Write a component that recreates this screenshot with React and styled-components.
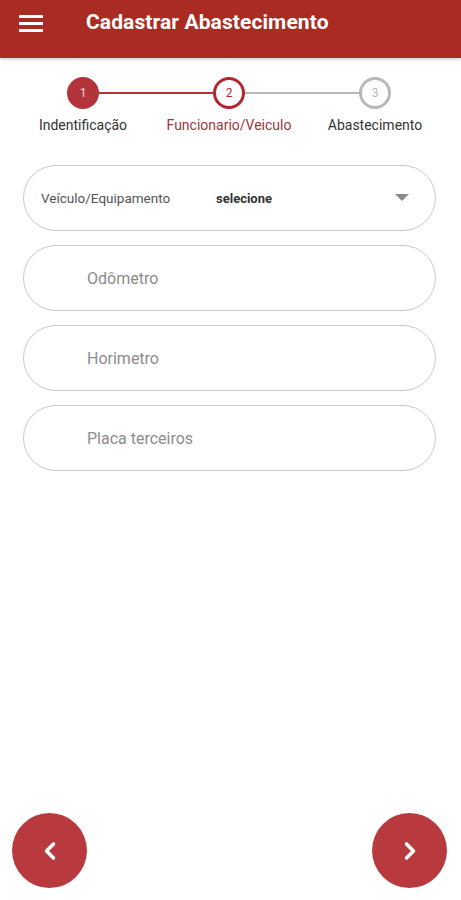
import React from 'react';
import styled, { createGlobalStyle } from 'styled-components';

const GlobalStyle = createGlobalStyle`
  html, body {
    margin: 0;
    padding: 0;
    background: #ffffff;
    font-family: Roboto, "Noto Sans", "Liberation Sans", sans-serif;
  }
`;

const Screen = styled.div`
  display: flex;
  flex-direction: column;
  width: 461px;
  height: 900px;
  background: #ffffff;
  overflow: hidden;
`;

const Header = styled.header`
  display: flex;
  align-items: center;
  height: 58px;
  padding: 0 0 0 19px;
  background-color: #aa2b22;
  box-shadow: 0 1px 3px rgba(0, 0, 0, 0.25);
  box-sizing: border-box;
  flex-shrink: 0;
`;

const MenuButton = styled.div`
  display: flex;
  flex-direction: column;
  justify-content: space-between;
  width: 24px;
  height: 17px;
  margin-right: 43px;
  margin-top: -12px;

  & span {
    display: block;
    height: 3px;
    background: #ffffff;
  }
`;

const Title = styled.h1`
  margin: -14px 0 0;
  color: #ffffff;
  font-size: 21px;
  font-weight: 700;
  letter-spacing: 0.1px;
`;

const Stepper = styled.div`
  display: grid;
  grid-template-columns: repeat(3, 146px);
  padding: 19px 0 0 10px;
`;

const Step = styled.div`
  position: relative;
  display: flex;
  flex-direction: column;
  align-items: center;

  &::after {
    content: '';
    display: ${({ $line }) => ($line ? 'block' : 'none')};
    position: absolute;
    top: 16px;
    left: 50%;
    width: 146px;
    height: 2px;
    margin-top: -1px;
    background: ${({ $line }) => $line};
    z-index: 0;
  }
`;

const Circle = styled.div`
  position: relative;
  z-index: 1;
  display: flex;
  align-items: center;
  justify-content: center;
  width: 32px;
  height: 32px;
  border-radius: 50%;
  box-sizing: border-box;
  font-size: 12px;
  background: ${({ $filled }) => ($filled ? '#b3343a' : '#ffffff')};
  border: 3px solid ${({ $color }) => $color};
  color: ${({ $filled, $color }) => ($filled ? '#f6dede' : $color)};
`;

const StepLabel = styled.div`
  margin-top: 8px;
  font-size: 14px;
  color: ${({ $active }) => ($active ? '#a3343a' : '#333333')};
  white-space: nowrap;
`;

const Form = styled.div`
  display: flex;
  flex-direction: column;
  gap: 14px;
  padding: 32px 25px 0 23px;
`;

const Field = styled.div`
  display: flex;
  align-items: center;
  height: 66px;
  padding: 0 ${({ $select }) => ($select ? '26px 0 17px' : '0 0 63px')};
  border: 1px solid #c9c9c9;
  border-radius: 33px;
  box-sizing: border-box;
`;

const SelectLabel = styled.span`
  width: 175px;
  font-size: 13.5px;
  color: #555555;
  white-space: nowrap;
`;

const SelectValue = styled.span`
  flex: 1;
  font-size: 13px;
  font-weight: 700;
  color: #333333;
`;

const Caret = styled.span`
  width: 0;
  height: 0;
  border-left: 7px solid transparent;
  border-right: 7px solid transparent;
  border-top: 7px solid #8a8a8a;
  margin-top: -2px;
`;

const Placeholder = styled.span`
  font-size: 16px;
  color: #8c8c8c;
`;

const Footer = styled.div`
  display: flex;
  justify-content: space-between;
  margin-top: auto;
  padding: 0 14px 12px 12px;
`;

const RoundButton = styled.button`
  display: flex;
  align-items: center;
  justify-content: center;
  width: 75px;
  height: 75px;
  padding: 0;
  border: none;
  border-radius: 50%;
  background: #b83a3e;
  cursor: pointer;
`;

const Chevron = ({ dir }) => (
  <svg width="26" height="26" viewBox="0 0 26 26">
    <path
      d={dir === 'left' ? 'M16.5 6 L9.5 13 L16.5 20' : 'M9.5 6 L16.5 13 L9.5 20'}
      fill="none"
      stroke="#ffffff"
      strokeWidth="3.6"
      strokeLinecap="round"
      strokeLinejoin="round"
    />
  </svg>
);

const steps = [
  { n: 1, label: 'Indentificação', color: '#b3343a', filled: true, line: '#b3343a' },
  { n: 2, label: 'Funcionario/Veiculo', color: '#b3262e', active: true, line: '#b8b8b8' },
  { n: 3, label: 'Abastecimento', color: '#b8b8b8' },
];

const fields = ['Odômetro', 'Horimetro', 'Placa terceiros'];

export default function App() {
  return (
    <Screen>
      <GlobalStyle />
      <Header>
        <MenuButton>
          <span />
          <span />
          <span />
        </MenuButton>
        <Title>Cadastrar Abastecimento</Title>
      </Header>

      <Stepper>
        {steps.map((s) => (
          <Step key={s.n} $line={s.line}>
            <Circle $filled={s.filled} $color={s.color}>{s.n}</Circle>
            <StepLabel $active={s.active}>{s.label}</StepLabel>
          </Step>
        ))}
      </Stepper>

      <Form>
        <Field $select>
          <SelectLabel>Veículo/Equipamento</SelectLabel>
          <SelectValue>selecione</SelectValue>
          <Caret />
        </Field>
        {fields.map((f) => (
          <Field key={f}>
            <Placeholder>{f}</Placeholder>
          </Field>
        ))}
      </Form>

      <Footer>
        <RoundButton aria-label="voltar">
          <Chevron dir="left" />
        </RoundButton>
        <RoundButton aria-label="avançar">
          <Chevron dir="right" />
        </RoundButton>
      </Footer>
    </Screen>
  );
}
